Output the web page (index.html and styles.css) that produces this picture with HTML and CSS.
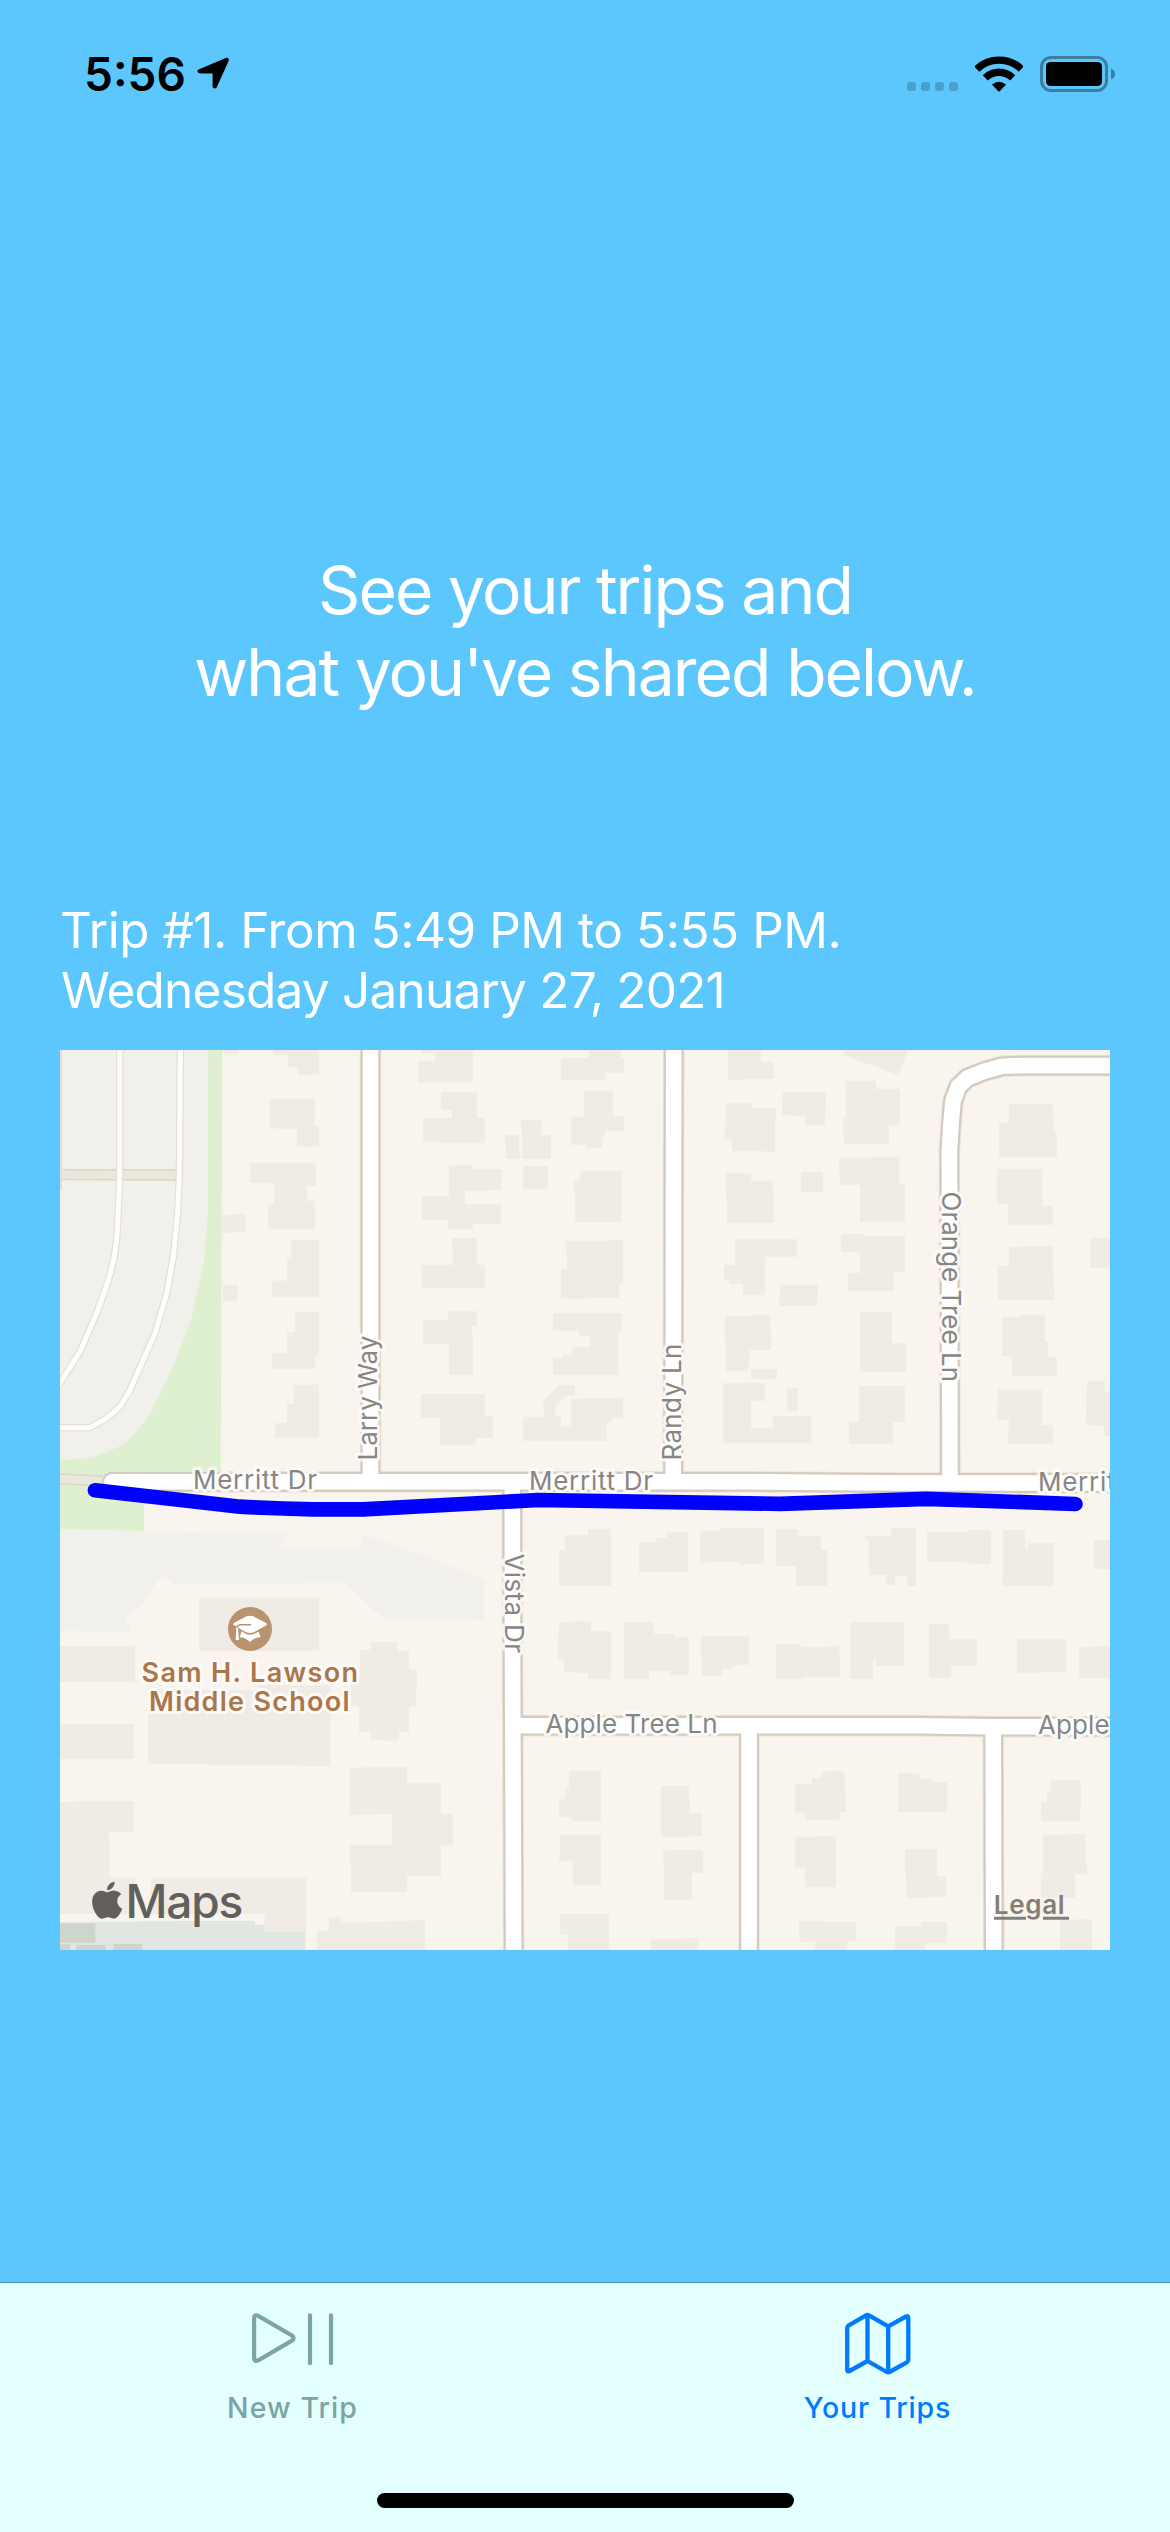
FILE: index.html
```html
<!DOCTYPE html>
<html lang="en">
<head>
<meta charset="utf-8">
<title>Your Trips</title>
<link rel="stylesheet" href="styles.css">
</head>
<body>
<div class="screen">
  <header class="status-bar">
    <div class="status-left">
      <span class="clock">5:56</span>
      <svg class="location" width="34" height="34" viewBox="0 0 34 34"><path d="M1.6 12.6 L28.8 1 Q32.6 -.2 31.6 4 L19.6 30.4 Q18 32.6 16 30.6 Q15.6 30 15.6 29 V16.600 H3.500 Q.2 16 .4 14 Q.7 13 1.600 12.600Z"/></svg>
    </div>
    <div class="status-right">
      <svg class="signal" width="51" height="36" viewBox="0 0 51 36"><rect y="26" width="9" height="9" rx="3"/><rect x="14" y="26" width="9" height="9" rx="3"/><rect x="28" y="26" width="9" height="9" rx="3"/><rect x="42" y="26" width="9" height="9" rx="3"/></svg>
      <svg class="wifi" width="48" height="36" viewBox="0 0 48 36"><g fill="none" stroke="#000" stroke-width="7.300"><path d="M1.800 13A32 32 0 0 1 46.200 13"/><path d="M10.300 21.800A19.700 19.700 0 0 1 37.700 21.800"/></g><path d="M17 28.600Q24 22.800 31 28.600L24.700 35.300Q24 36 23.300 35.300Z"/></svg>
      <svg class="battery" width="75" height="36" viewBox="0 0 75 36"><rect x="1.500" y="1.500" width="65" height="33" rx="9.500" fill="none" stroke="#3b7ea0" stroke-width="3"/><rect x="6" y="6" width="56" height="24" rx="4.500"/><path d="M71 12.500Q75 14 75 18T71 23.500Z" fill="#3b7ea0"/></svg>
    </div>
  </header>

  <main class="content">
    <h1 class="headline">See your trips and<br>what you've shared below.</h1>
    <section class="trip">
      <p class="trip-info"><span class="trip-time">Trip #1. From 5:49 PM to 5:55 PM.</span><span class="trip-date">Wednesday January 27, 2021</span></p>
      <svg class="map" viewBox="60 1050 1050 900" width="1050" height="900">
        <rect class="land" x="60" y="1050" width="1050" height="900"/>

        <!-- park and running track -->
        <g transform="translate(60 1050) scale(.33333)">
          <path class="park" d="M0 0H487L482 1290H252V1444L0 1438Z"/>
          <path class="paved" d="M0 0H444V490L432 630L396 800Q350 940 262 1105Q225 1150 205 1170Q190 1190 100 1220Q40 1232 0 1227Z"/>
          <path class="path-edge" d="M0 374L366 375M0 1286L135 1294"/>
          <path class="path-fill" d="M0 374L366 375M0 1286L135 1294"/>
          <path class="track-edge" d="M179 0V380L172 545Q165 640 135 720L110 790L60 905L-4 1006M361 0L358 380L352 500L340 620L320 730L285 850L210 1020L180 1070L137 1107L88 1133H-4M-5 0V420"/>
          <path class="track-fill" d="M179 0V380L172 545Q165 640 135 720L110 790L60 905L-4 1006M361 0L358 380L352 500L340 620L320 730L285 850L210 1020L180 1070L137 1107L88 1133H-4"/>
        </g>

        <!-- school grounds -->
        <g transform="translate(60 1490) scale(.33333)">
          <path class="paved" d="M0 118L252 124L680 130L658 173H897L914 134L1050 182L1272 267L1274 390L985 387Q960 380 940 360L890 308Q870 290 850 278L340 283L316 255L285 283L238 356L195 378L216 425L0 422Z"/>
          <path class="building" d="M417 323H777V483H417Z M0 468H225V576H0Z M0 705L60 702H222V807H0Z M0 936L87 933H222V1026H147V1048H150V1163H225V1272H0Z M273 1163H738V1330H614V1272H273Z M264 600H594V585H812V700H810V828H724V825H432V822H264Z M930 456H1014V483H1047V537H1071V603H1068V651H1047V726H1017V745L1014 752H960V750H933V726H897V648H873V560H900V480H930Z M870 834L940 831H1041V879H1143V972H1179V1065H1143V1158H1041V1206H873V1118H870V1065H996V972L870 975Z M771 1323H807V1281H843V1299L920 1296L1095 1291V1380H771Z"/>
          <path class="court" d="M0 1297L350 1293H585V1304H614V1326H736V1380H0Z"/>
          <path class="court-dark" d="M0 1300H106V1358H0Z M0 1363H30V1380H0Z M48 1365H137V1380H48Z M160 1362H247V1380H160Z"/>
        </g>

        <!-- houses, Larry Way west side -->
        <path class="building" transform="translate(60 1050) scale(.33333)" d="M492 0H537V12H492Z M639 0H777V75H714V51H684V14H639Z M630 147H764V228H777V291H711V236H642V233H630Z M570 339H768V407H741V453H765V537H624V462H642V399H570Z M486 495H525V492H558V545H528V548H486Z M693 570H777V741H636V692H681V627H693Z M489 705H534V735H531V753H489Z M705 786H777V900L774 921H765V957H636V909H681V846H705Z M702 1005H765V1002H777V1163H645V1119H681V1062H702Z"/>
        <!-- houses, Larry Way to Randy Ln -->
        <path class="building" transform="translate(400 1050) scale(.33333)" d="M66 0H219V98H54V33H105V8H66Z M567 0H663V24H672V69H618V90H483V24H567Z M123 126H231V204H255V279H111V275H69V204H156V180H123Z M552 123H639V198H672V243H615V261H606V293H558V285H513V201H552Z M363 210H426V255H453V327H366V240H363Z M315 255H357V303H360V327H318V290H315Z M369 348H444V417H369Z M147 345H219V357H306V420H264V423H195V462H303V522H219V537H144V510H66V438H147Z M540 363H666V516H525V423H522V393H540Z M156 564H231V645H255V714H66V645H159Z M498 573H621V570H669V705H657V744H564V747H483V657H480V657H501V606H498Z M144 783H231V828H216V862H219V975H147V882H69V813L90 810H144Z M459 789H666V849H654V975H459V924H486V915H516V891H570V858H537V843H459Z M63 1032H255V1098H279V1164H228V1185H120V1104H63Z M477 1005H525V1038H495L465 1068V1098L483 1100V1131H513V1047L570 1044H669V1104H640L618 1128L621 1173H369V1101H432L429 1056Z M984 0H1083V36H1122V87H1030V90H984Z M978 159H1056V174H1128V213H1125V306H1092V303H996V267H975V220H978Z M978 369H1053V393H1119V432H1122V519H981V444H978Z M1005 567H1191V621H1095V735H1029V702H987V690H972V645H1005Z M975 798H1050V795H1110V840H1113V900H1050L1047 963H978V880H975Z M969 999H1095V1053H1053V1134H1119V1098H1233V1179H969Z"/>
        <!-- houses, Randy Ln to the east edge -->
        <path class="building" transform="translate(750 1050) scale(.33333)" d="M3 957H81V987H3Z M111 1014H144V1083H111Z M278 14L282 0H474L445 75Z M98 126H228L225 225H165V198L96 195Z M288 93H378V117H450V225H417V282H282L279 204H288Z M153 366H219V426H153Z M267 324L360 321H447V402H465V513L330 516V405H270Z M273 552H342V558H465V666H432V723H294V669H330V606H273Z M90 705H204L201 768H87Z M330 786H426V879H468V966H330Z M327 1008H465V1116H429V1182H297V1116H327Z M777 162H909L912 245L921 256V321H747V219H777Z M741 357H876V468H909V525H774V462H741Z M777 591L909 588V640L915 750H744V648H777Z M756 801H813V795H885V876H894V921H921V978H786V918H756Z M744 1017L876 1020V1125H909V1182H774L777 1110H741Z M1020 564H1080V652L1020 654Z M1011 993H1065V1026H1080V1158H1062V1128L1008 1125Z"/>
        <!-- houses south of Merritt Dr -->
        <path class="building" transform="translate(400 1490) scale(.33333)" d="M495 135H564V117H633V288H477V180H495Z M717 156H768V144H801V126H864V246H717Z M900 123H960V114H1092V222H1017V216H934V219H900Z M477 396H513V393H573V423H633V567H564V549H525V546H492V507H474V440H477Z M672 396H762V432H822V441H867V555H810V543H747V567H672Z M903 438H1047V525H1005V528H996V537H966V555L934 558H906V500H903Z M507 843H603V993H516V981H477V927H495V894H507Z M783 888H867V936H870V969H906V1038L852 1041H786V1032H783Z M480 1035H603V1185H519V1113H477V1090H480Z M798 1080H909V1149H876V1213H879V1226L840 1230H792V1110H789V1083Z M480 1272H627V1380H504V1335H483V1325H480Z M753 1347H852V1344H894V1380H753Z"/>
        <path class="building" transform="translate(750 1490) scale(.33333)" d="M78 117H144V138H213V180H231V288H138V228H78Z M345 138H423V114H498V288H471V258H435V285H408V255H357V153H345Z M531 126H651V120H723V222H669V225H651V216H531Z M759 120H825V177H834V159H912V288H756V250H759Z M1032 150H1080V237H1032Z M78 462H153V471H240V468H267V490H270V561H156V567H78Z M300 396H462V528H378V507H369V567H300Z M537 402H597V447H681V528H603V564H537Z M801 447H948V546H873V549H801Z M987 471H1032V468H1080V564H987Z M135 882H186V864H216V849L231 843H282V852H285V908H288V966H270V987L240 990H165V969H135Z M444 849H507V867H543V876H591V966H444Z M135 1041H204V1038H258V1191H165V1134H135Z M465 1077H561V1158H588V1221H534V1224H468V1152H465Z M903 870H990V880H993V960H990V993H873V936H891V903H903Z M879 1035H963V1032H1008V1119H1011V1152H975V1224H873V1150H879Z M147 1293H219V1296H318V1353H291V1380H195V1356H150V1335H147Z M435 1308H513V1296H591V1359H525V1380H435Z M930 1290L1026 1287V1380H930Z"/>

        <!-- roads: casing below, surface above -->
        <defs>
          <g id="roads">
            <path d="M112 1481.800H750L900 1483H1120" stroke-linecap="round"/>
            <path d="M370.500 1040V1481M673.700 1040L673.200 1481M950 1482L949.400 1150L951 1124L953 1101L958.300 1086.700L967.300 1078L984.300 1071.300L1002 1066.300L1020 1065.600H1120"/>
            <path d="M512.300 1482L512.500 1640L513.700 1960M513 1725.700H917L993 1726.700H1120M749 1726V1960M993.200 1726L993.800 1960"/>
          </g>
        </defs>
        <use href="#roads" class="road-halo"/>
        <use href="#roads" class="road-edge"/>
        <use href="#roads" class="road-fill"/>

        <g class="street">
          <text x="193" y="1489.300" textLength="124">Merritt Dr</text>
          <text x="529" y="1489.500" textLength="124">Merritt Dr</text>
          <text x="1038" y="1490.700" textLength="124">Merritt Dr</text>
          <text x="545.500" y="1732.700" textLength="172">Apple Tree Ln</text>
          <text x="1038" y="1733.700" textLength="172">Apple Tree Ln</text>
          <text transform="translate(376.700 1460.500) rotate(-90)" textLength="125">Larry Way</text>
          <text transform="translate(681 1460.500) rotate(-90)" textLength="117">Randy Ln</text>
          <text transform="translate(942.300 1191.500) rotate(90)" textLength="190.500">Orange Tree Ln</text>
          <text transform="translate(505 1553.500) rotate(90)" textLength="99.500">Vista Dr</text>
        </g>

        <g class="school">
          <text x="141.500" y="1681.700" textLength="216.500">Sam H. Lawson</text>
          <text x="149" y="1711.300" textLength="200.500">Middle School</text>
        </g>
        <circle cx="250" cy="1629" r="22" fill="#b9926e"/>
        <g transform="translate(60 1490) scale(.33333)">
          <path fill="#fff" d="M560 379Q570 375 580 379L617 398Q625 403 617 407L583 426Q570 432 557 426L534 413L537 450H527L529 408L522 406Q517 403 523 398Z M545 424L559 432Q570 437 581 432L596 425L602 442Q586 440 570 456Q556 442 539 442Z"/>
          <path d="M573 404L540 404Q531 405 531 413" fill="none" stroke="#b9926e" stroke-width="4.500"/>
        </g>

        <path class="route" d="M95 1490.300L240 1506.700Q275 1508.500 313 1509.300L363 1509.300L538 1500L780 1503.800L926 1498.800L1075.500 1504"/>

        <path class="brand-mark" transform="translate(88.700 1881.700) scale(1.540)" d="M12.152 6.896c-.948 0-2.415-1.078-3.960-1.040-2.040.027-3.910 1.183-4.961 3.014-2.117 3.675-.546 9.103 1.519 12.090 1.013 1.454 2.208 3.090 3.792 3.039 1.520-.065 2.090-.987 3.935-.987 1.831 0 2.350.987 3.960.948 1.637-.026 2.676-1.480 3.676-2.948 1.156-1.688 1.636-3.325 1.662-3.415-.039-.013-3.182-1.221-3.220-4.857-.026-3.040 2.480-4.494 2.597-4.559-1.429-2.090-3.623-2.324-4.390-2.376-2-.156-3.675 1.090-4.610 1.090zM15.530 3.830c.843-1.012 1.400-2.427 1.245-3.830-1.207.052-2.662.805-3.532 1.818-.780.896-1.454 2.338-1.273 3.714 1.338.104 2.715-.688 3.559-1.701"/>
        <text class="brand" x="125.500" y="1918">Maps</text>
        <text class="legal" x="993.800" y="1913.700">Legal</text>
        <path class="legal-line" d="M994 1918.300H1026M1043 1918.300H1069"/>
      </svg>
    </section>
  </main>

  <nav class="tab-bar">
    <div class="tabs">
      <a class="tab">
        <svg width="82" height="64" viewBox="0 0 82 64" fill="none" stroke="currentColor" stroke-width="4.200" stroke-linecap="round" stroke-linejoin="round"><path d="M2.100 6.500Q2.100 1.600 6.600 4.100L39.500 23.200Q43.600 26.200 39.500 28.900L6.600 48.200Q2.100 50.600 2.100 45.700Z"/><path d="M58 3.300V51.200M79 3.300V51.200"/></svg>
        <span class="tab-new">New Trip</span>
      </a>
      <a class="tab active">
        <svg width="66" height="64" viewBox="0 0 66 64" fill="none" stroke="currentColor" stroke-width="4.300" stroke-linecap="round" stroke-linejoin="round"><path d="M2.200 16Q2.200 14.200 3.800 13.300L21 3.300Q22.500 2.500 24 3.300L43.200 14.300L61 4.500Q63.300 3.400 63.300 6V47.500Q63.300 49.300 61.800 50.300L44.500 60Q43.200 60.800 41.800 60L22.500 49L4.500 59Q2.200 60.200 2.200 57.800ZM22.500 4V49M43.200 15V60"/></svg>
        <span class="tab-trips">Your Trips</span>
      </a>
    </div>
    <div class="home-indicator"></div>
  </nav>
</div>
</body>
</html>
```
FILE: styles.css
```css
* { box-sizing: border-box; }
body { margin: 0; font-family: Inter, "Liberation Sans", sans-serif; background: #5bc7fc; }
svg { display: block; flex: none; }

.screen { width: 1170px; height: 2532px; display: flex; flex-direction: column; overflow: hidden; }

.status-bar { height: 141px; padding: 56px 55px 0 84px; display: flex; justify-content: space-between; align-items: flex-start; }
.status-left, .status-right { display: flex; align-items: flex-start; }
.status-left { gap: 11px; }
.status-right { gap: 17px; }
.clock { font-size: 46px; font-weight: 600; line-height: 36px; }
.location { margin-top: 1px; }
.signal { fill: #49a0cb; }

.content { flex: 1; display: flex; flex-direction: column; padding: 408px 60px 0; }
.headline { margin: 0 0 187px; color: #fff; font-size: 66px; font-weight: 400; line-height: 82px; letter-spacing: -1.980px; text-align: center; }
.trip { display: flex; flex-direction: column; gap: 30px; }
.trip-info { margin: 0; color: #fff; font-size: 49.500px; line-height: 60px; display: flex; flex-direction: column; white-space: nowrap; }
.trip-time { letter-spacing: -.460px; }
.trip-date { letter-spacing: -.780px; padding-left: 1px; }

.land { fill: #f9f4ed; }
.park { fill: #dff0d1; }
.paved { fill: #f1f0eb; }
.building { fill: #f0ebe4; }
.court { fill: #e1e7e0; }
.court-dark { fill: #ced5cd; }
.path-edge { fill: none; stroke: #dcd6c3; stroke-width: 34; }
.path-fill { fill: none; stroke: #e8e8dc; stroke-width: 25; }
.track-edge { fill: none; stroke: #e1dfd8; stroke-width: 22; }
.track-fill { fill: none; stroke: #fefdf8; stroke-width: 15; }
.road-halo, .road-edge, .road-fill { fill: none; stroke-linejoin: round; }
.road-halo { stroke: #e9e2d8; stroke-width: 21.400px; }
.road-edge { stroke: #d4cabe; stroke-width: 19.800px; }
.road-fill { stroke: #fff; stroke-width: 15.600px; }
.street text, .school text { paint-order: stroke; stroke: #fffdfa; stroke-opacity: .850; stroke-width: 6px; stroke-linejoin: round; }
.street text { font-size: 26px; fill: #868686; }
.school text { font-size: 27px; font-weight: 600; fill: #ab764b; }
.route { fill: none; stroke: #0000ff; stroke-width: 14.700px; stroke-linecap: round; stroke-linejoin: round; }
.brand-mark, .brand { fill: #62605c; }
.brand { font-size: 46px; font-weight: 500; letter-spacing: -1.200px; }
.legal { font-size: 26px; font-weight: 600; letter-spacing: .700px; fill: #817f7b; }
.legal-line { stroke: #817f7b; stroke-width: 3; }

.tab-bar { height: 250px; background: #e3fffe; border-top: 1px solid #3e93bd; display: flex; flex-direction: column; justify-content: space-between; align-items: center; padding: 29px 0 24px; }
.tabs { display: flex; align-self: stretch; }
.tab { flex: 1; display: flex; flex-direction: column; align-items: center; gap: 14px; color: #7ba4a3; font-size: 28.500px; font-weight: 500; line-height: 36px; }
.tab.active { color: #007aff; }
.tab-new { letter-spacing: 1.100px; }
.tab-trips { letter-spacing: .860px; }
.home-indicator { width: 417px; height: 15px; border-radius: 8px; background: #000; }
```
